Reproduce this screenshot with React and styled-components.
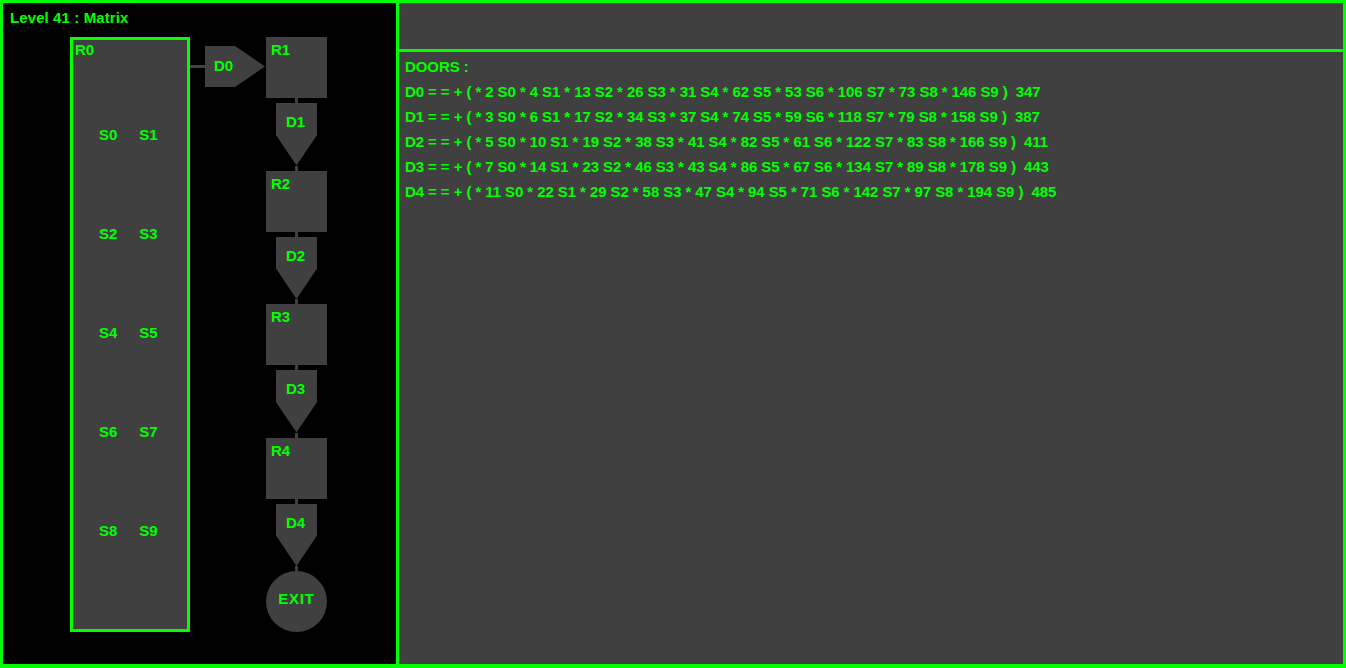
import React from 'react'
import styled, { createGlobalStyle } from 'styled-components'

const GREEN = '#00ff00'
const GRAY = '#404040'

const GlobalStyle = createGlobalStyle`
    html, body {
        margin: 0;
        padding: 0;
        background: #000;
    }
    * {
        box-sizing: border-box;
    }
`

const doors = [
    { name: 'D0', coefs: [2, 4, 13, 26, 31, 62, 53, 106, 73, 146], total: 347 },
    { name: 'D1', coefs: [3, 6, 17, 34, 37, 74, 59, 118, 79, 158], total: 387 },
    { name: 'D2', coefs: [5, 10, 19, 38, 41, 82, 61, 122, 83, 166], total: 411 },
    { name: 'D3', coefs: [7, 14, 23, 46, 43, 86, 67, 134, 89, 178], total: 443 },
    { name: 'D4', coefs: [11, 22, 29, 58, 47, 94, 71, 142, 97, 194], total: 485 },
]

const switchRows = [
    ['S0', 'S1'],
    ['S2', 'S3'],
    ['S4', 'S5'],
    ['S6', 'S7'],
    ['S8', 'S9'],
]

// rooms R1..R4 each followed by a door going down
const chain = [
    { room: 'R1', door: 'D1' },
    { room: 'R2', door: 'D2' },
    { room: 'R3', door: 'D3' },
    { room: 'R4', door: 'D4' },
]

export default function App() {
    return (
        <>
            <GlobalStyle />
            <Frame>
                <LeftPanel>
                    <Title>Level 41 : Matrix</Title>
                    <Board>
                        <BigRoom>
                            <RoomLabel>R0</RoomLabel>
                            <Switches>
                                {switchRows.map((row, i) => (
                                    <SwitchRow key={`row-${i}`}>
                                        {row.map((s) => <Switch key={s}>{s}</Switch>)}
                                    </SwitchRow>
                                ))}
                            </Switches>
                        </BigRoom>
                        <HLink />
                        <DoorRight>D0</DoorRight>
                        <Chain>
                            {chain.map((item) => (
                                <React.Fragment key={item.room}>
                                    <Room>{item.room}</Room>
                                    <VLink />
                                    <DoorDown>{item.door}</DoorDown>
                                    <VLink />
                                </React.Fragment>
                            ))}
                            <Exit>EXIT</Exit>
                        </Chain>
                    </Board>
                </LeftPanel>
                <RightPanel>
                    <Header />
                    <Doors>
                        <Line>DOORS :</Line>
                        {doors.map((d) => (
                            <Line key={d.name}>
                                {`${d.name} = = + ( ${d.coefs.map((c, i) => `* ${c} S${i}`).join(' ')} )  ${d.total}`}
                            </Line>
                        ))}
                    </Doors>
                </RightPanel>
            </Frame>
        </>
    )
}

const Frame = styled.div`
    display: flex;
    width: 100%;
    height: 100vh;
    border: 3px solid ${GREEN};
    border-bottom-width: 4px;
    font-family: "Liberation Sans", Arial, sans-serif;
    font-weight: bold;
    font-size: 15px;
    color: ${GREEN};
`

const LeftPanel = styled.div`
    width: 396px;
    flex-shrink: 0;
    background: #000;
    border-right: 3px solid ${GREEN};
    padding: 6px 7px;
`

const Title = styled.div`
    line-height: 17px;
    letter-spacing: 0.1px;
`

const Board = styled.div`
    display: flex;
    align-items: flex-start;
    margin: 11px 0 0 60px;
`

const BigRoom = styled.div`
    width: 120px;
    height: 595px;
    border: 3px solid ${GREEN};
    background: ${GRAY};
    padding: 1px 2px;
`

const RoomLabel = styled.div`
    line-height: 17px;
`

const Switches = styled.div`
    display: flex;
    flex-direction: column;
    gap: 82px;
    margin-top: 68px;
`

const SwitchRow = styled.div`
    display: flex;
    gap: 22px;
    padding-left: 24px;
    line-height: 17px;
`

const Switch = styled.span``

const HLink = styled.div`
    width: 15px;
    height: 3px;
    margin-top: 28px;
    background: ${GRAY};
`

const DoorRight = styled.div`
    width: 61px;
    height: 41px;
    margin-top: 9px;
    background: ${GRAY};
    clip-path: polygon(0 0, 30px 0, 60px 50%, 30px 100%, 0 100%);
    display: flex;
    align-items: center;
    padding: 0 0 3px 9px;
    line-height: 17px;
`

const Chain = styled.div`
    display: flex;
    flex-direction: column;
    align-items: center;
    width: 61px;
`

const Room = styled.div`
    width: 61px;
    height: 61px;
    background: ${GRAY};
    padding: 4px 5px;
    line-height: 17px;
    align-self: stretch;
`

const VLink = styled.div`
    width: 3px;
    height: 5px;
    background: ${GRAY};
`

const DoorDown = styled.div`
    width: 41px;
    height: 62.5px;
    background: ${GRAY};
    clip-path: polygon(0 0, 100% 0, 100% 32px, 50% 100%, 0 32px);
    padding: 10px 2px 0 0;
    text-align: center;
    line-height: 17px;
`

const Exit = styled.div`
    width: 61px;
    height: 61px;
    border-radius: 50%;
    background: ${GRAY};
    display: flex;
    align-items: center;
    justify-content: center;
    padding-bottom: 6px;
    letter-spacing: 0.8px;
    line-height: 17px;
`

const RightPanel = styled.div`
    flex: 1;
    display: flex;
    flex-direction: column;
    background: ${GRAY};
`

const Header = styled.div`
    height: 49px;
    border-bottom: 3px solid ${GREEN};
`

const Doors = styled.div`
    padding: 2px 6px;
`

const Line = styled.div`
    line-height: 25px;
    white-space: pre;
    letter-spacing: -0.08px;
`
